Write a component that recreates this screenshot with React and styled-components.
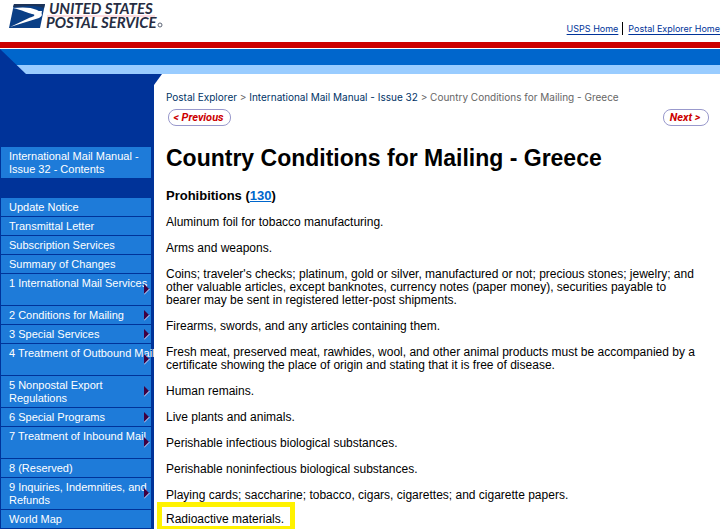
import React from "react";
import styled, { createGlobalStyle } from "styled-components";

const GlobalStyle = createGlobalStyle`
  *, *::before, *::after { box-sizing: border-box; }
  body {
    margin: 0;
    background: #fff;
    color: #000;
    font-family: "Liberation Sans", Arial, sans-serif;
    font-size: 12px;
    line-height: 13px;
  }
`;

const Page = styled.div`
  display: flex;
  flex-direction: column;
  min-height: 100vh;
  padding-right: 6px;
`;

const Masthead = styled.header`
  display: flex;
  justify-content: space-between;
  align-items: flex-end;
  height: 42px;
  padding: 0 0 7px 8px;
`;

const LogoLink = styled.a`
  display: block;
  align-self: flex-start;
`;

const LogoSvg = styled.svg`
  display: block;
  overflow: visible;
`;

const LogoText = styled.text`
  font-family: Lato, "Liberation Sans", sans-serif;
  font-size: 15px;
  font-weight: 700;
  font-style: italic;
  fill: #262d42;
`;

const TopLinks = styled.nav`
  display: flex;
  align-items: center;
  font-family: Inter, "Liberation Sans", sans-serif;
  font-size: 9px;
`;

const TopLink = styled.a`
  color: #003399;
  text-decoration: underline;
  text-underline-offset: 2px;
  & + & {
    margin-left: 4px;
    padding-left: 5px;
    border-left: 1px solid #000;
  }
`;

const RedRule = styled.div`
  height: 6px;
  margin-bottom: 1px;
  background: #cc0000;
`;

const Bands = styled.div`
  display: grid;
  grid-template-columns: 26px 1fr;
  grid-template-rows: 16px 9px;
`;

const BandCorner = styled.svg`
  grid-row: 1 / 3;
  display: block;
`;

const Band = styled.div`
  background: ${(p) => p.$color};
`;

const Columns = styled.div`
  display: flex;
  flex: 1;
`;

const Sidebar = styled.nav`
  flex: 0 0 154px;
  min-width: 0;
  padding: 73px 3px 1px 1px;
  background: #003399;
`;

const NavList = styled.ul`
  display: flex;
  flex-direction: column;
  gap: 1px;
  margin: 20px 0 0;
  padding: 0;
  list-style: none;
`;

const NavLink = styled.a`
  display: flex;
  align-items: center;
  justify-content: space-between;
  min-height: ${(p) => (p.$tall ? 31 : 18)}px;
  background: #1e7bd9;
  color: #fff;
  font-size: 11px;
  text-decoration: none;
`;

const NavLabel = styled.span`
  flex: 1;
  min-width: 0;
  align-self: flex-start;
  padding: 3px 0 2px 8px;
  white-space: pre;
`;

const ArrowSvg = styled.svg`
  flex: none;
  margin-right: 1px;
`;

const Main = styled.main`
  flex: 1;
  min-width: 0;
  padding-right: 8px;
`;

const Corner = styled.svg`
  display: block;
`;

const Content = styled.div`
  padding: 6px 0 0 12px;
`;

const Crumbs = styled.nav`
  color: #666;
  font-family: Inter, "Liberation Sans", sans-serif;
  font-size: 10px;
  line-height: 12px;
`;

const CrumbLink = styled.a`
  color: #003366;
  text-decoration: none;
`;

const Pager = styled.div`
  display: flex;
  justify-content: space-between;
  margin: 6px 3px 0 2px;
`;

const PagerLink = styled.a`
  padding: 0 6px 0 4px;
  min-width: ${(p) => p.$width}px;
  border: 1px solid #9999cc;
  border-radius: 8px;
  color: #cc0000;
  font-family: Roboto, "Liberation Sans", sans-serif;
  font-size: 11px;
  font-weight: 700;
  font-style: italic;
  line-height: 15px;
  text-align: center;
  text-decoration: none;
`;

const Title = styled.h1`
  margin: 19px 0 0;
  font-size: 23px;
  line-height: 27px;
`;

const Subtitle = styled.h2`
  margin: 16px 0 13px;
  font-size: 13px;
  line-height: 15px;
`;

const RefLink = styled.a`
  color: #0066cc;
`;

const Paragraph = styled.p`
  margin: 0 12px 13px 0;
`;

const Highlighted = styled.p`
  width: fit-content;
  margin: -13px 0 0 -9px;
  padding: 6px 6px 0 4px;
  border: 5px solid #fff200;
`;

const navItems = [
  { label: "Update Notice" },
  { label: "Transmittal Letter" },
  { label: "Subscription Services" },
  { label: "Summary of Changes" },
  { label: "1 International Mail Services", arrow: true, tall: true },
  { label: "2 Conditions for Mailing", arrow: true },
  { label: "3 Special Services", arrow: true },
  { label: "4 Treatment of Outbound Mail", arrow: true, tall: true },
  { label: "5 Nonpostal Export\nRegulations", arrow: true, tall: true },
  { label: "6 Special Programs", arrow: true },
  { label: "7 Treatment of Inbound Mail", arrow: true, tall: true },
  { label: "8 (Reserved)" },
  { label: "9 Inquiries, Indemnities, and\nRefunds", arrow: true, tall: true },
  { label: "World Map" },
];

const paragraphs = [
  "Aluminum foil for tobacco manufacturing.",
  "Arms and weapons.",
  "Coins; traveler's checks; platinum, gold or silver, manufactured or not; precious stones; jewelry; and other valuable articles, except banknotes, currency notes (paper money), securities payable to bearer may be sent in registered letter-post shipments.",
  "Firearms, swords, and any articles containing them.",
  "Fresh meat, preserved meat, rawhides, wool, and other animal products must be accompanied by a certificate showing the place of origin and stating that it is free of disease.",
  "Human remains.",
  "Live plants and animals.",
  "Perishable infectious biological substances.",
  "Perishable noninfectious biological substances.",
  "Playing cards; saccharine; tobacco, cigars, cigarettes; and cigarette papers.",
];

function Logo() {
  return (
    <LogoSvg width="158" height="32" viewBox="0 0 158 32" role="img" aria-label="United States Postal Service">
      <path d="M6 4h31l-5 24H1z" fill="#0a3f86" />
      <path d="M6 4h31l-1 4C28 5 20 6 5 7z" fill="#1c3358" />
      <path d="M5 8c9-1 18-1 24 2 1 1 2 1 5 1l-1 5-6 1c0-2-1-3-3-3-4-1-10-4-19-6z" fill="#fff" />
      <path d="M25 12c4 0 6 0 8 1 2 2 0 4-2 5L2 27l19-9c3-1 6-2 6-4z" fill="#fff" />
      <path d="M39 16h108" stroke="#f7b8c2" />
      <LogoText x="41" y="14">UNITED STATES</LogoText>
      <LogoText x="38" y="28">POSTAL SERVICE</LogoText>
      <circle cx="152" cy="25" r="2" fill="none" stroke="#5b6374" />
    </LogoSvg>
  );
}

function Arrow() {
  return (
    <ArrowSvg width="6" height="11" viewBox="0 0 6 11" aria-hidden="true">
      <path d="M0 0v10l5-5z" fill="#400040" />
      <path d="M0 10.5l5.5-5.5" stroke="#d8c8e8" fill="none" />
    </ArrowSvg>
  );
}

export default function App() {
  return (
    <>
      <GlobalStyle />
      <Page>
        <Masthead>
          <LogoLink href="#home"><Logo /></LogoLink>
          <TopLinks aria-label="Site">
            <TopLink href="#usps">USPS Home</TopLink>
            <TopLink href="#explorer">Postal Explorer Home</TopLink>
          </TopLinks>
        </Masthead>
        <RedRule />
        <Bands>
          <BandCorner width="26" height="25" viewBox="0 0 26 25" aria-hidden="true">
            <path d="M0 0h26v16H0z" fill="#0066cc" />
            <path d="M0 16h26v9H0z" fill="#99ccff" />
            <path d="M0 0l26 25H0z" fill="#003399" />
          </BandCorner>
          <Band $color="#0066cc" />
          <Band $color="#99ccff" />
        </Bands>
        <Columns>
          <Sidebar aria-label="Manual">
            <NavLink href="#contents" $tall>
              <NavLabel>{"International Mail Manual -\nIssue 32 - Contents"}</NavLabel>
            </NavLink>
            <NavList>
              {navItems.map((item) => (
                <li key={item.label}>
                  <NavLink href="#section" $tall={item.tall}>
                    <NavLabel>{item.label}</NavLabel>
                    {item.arrow && <Arrow />}
                  </NavLink>
                </li>
              ))}
            </NavList>
          </Sidebar>
          <Main>
            <Corner width="8" height="11" viewBox="0 0 8 11" aria-hidden="true">
              <path d="M0 0h8L0 11z" fill="#003399" />
            </Corner>
            <Content>
              <Crumbs aria-label="Breadcrumb">
                <CrumbLink href="#explorer">Postal Explorer</CrumbLink> &gt;{" "}
                <CrumbLink href="#manual">International Mail Manual - Issue 32</CrumbLink> &gt; Country
                Conditions for Mailing - Greece
              </Crumbs>
              <Pager>
                <PagerLink href="#previous" $width={63}>&lt; Previous</PagerLink>
                <PagerLink href="#next" $width={46}>Next &gt;</PagerLink>
              </Pager>
              <Title>Country Conditions for Mailing - Greece</Title>
              <Subtitle>
                Prohibitions (<RefLink href="#130">130</RefLink>)
              </Subtitle>
              {paragraphs.map((text) => (
                <Paragraph key={text}>{text}</Paragraph>
              ))}
              <Highlighted>Radioactive materials.</Highlighted>
            </Content>
          </Main>
        </Columns>
      </Page>
    </>
  );
}
